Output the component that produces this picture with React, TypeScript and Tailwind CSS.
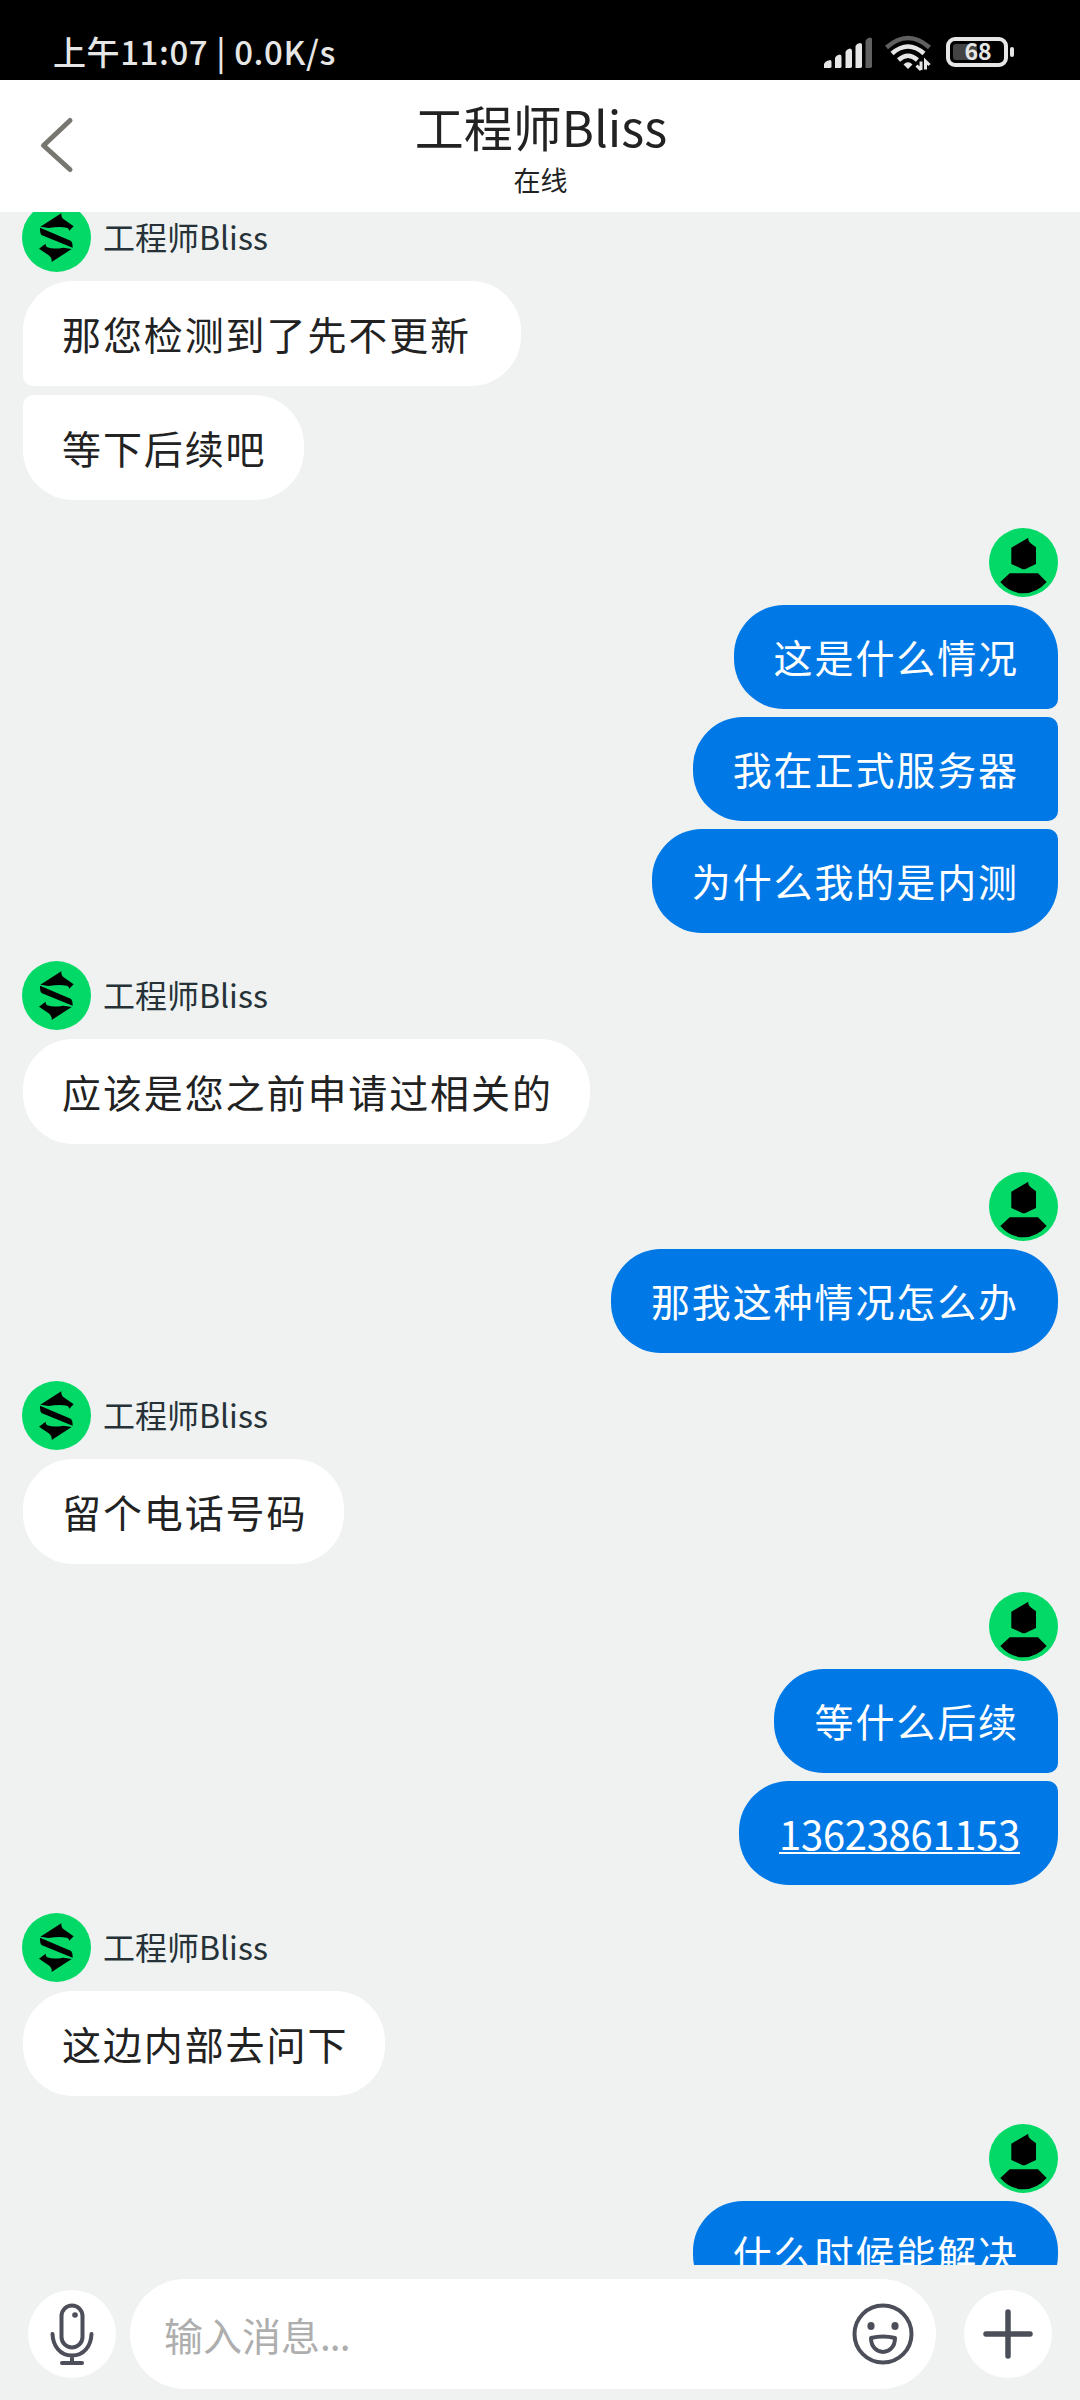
import clsx from "clsx";

type Group = {
  from: "agent" | "me";
  messages: string[];
};

const groups: Group[] = [
  { from: "agent", messages: ["那您检测到了先不更新", "等下后续吧"] },
  { from: "me", messages: ["这是什么情况", "我在正式服务器", "为什么我的是内测"] },
  { from: "agent", messages: ["应该是您之前申请过相关的"] },
  { from: "me", messages: ["那我这种情况怎么办"] },
  { from: "agent", messages: ["留个电话号码"] },
  { from: "me", messages: ["等什么后续", "13623861153"] },
  { from: "agent", messages: ["这边内部去问下"] },
  { from: "me", messages: ["什么时候能解决"] },
];

const AgentAvatar = () => (
  <svg className="size-[69px] shrink-0" viewBox="66 63 207 207">
    <circle cx="169.5" cy="166.5" r="103.5" fill="#03d967" />
    <path d="M184 94Q183 106 191 112L221 133L207 147Q208 139 200 137Q178 133 146 138L121 134Z" />
    <path d="M120 137L212 176Q218 180 218 197L126 160Q119 155 120 137Z" />
    <path d="M117 200L137 185Q136 193 142 196Q160 203 190 197L215 201L155 240Q157 228 146 220Z" />
  </svg>
);

const UserAvatar = () => (
  <svg className="size-[69px] shrink-0" viewBox="87 66 207 207">
    <circle cx="190.5" cy="169.5" r="103.5" fill="#03d967" />
    <path d="M205 95Q203 106 212 112L228 124V174L198 188Q192 191 185 188L154 174V125Z" />
    <path d="M149 202H234L260 228Q230 262 190 262Q150 262 121 228Z" />
  </svg>
);

const StatusBar = () => (
  <div className="flex h-20 shrink-0 items-start justify-between bg-black pl-[53px] pr-[66px] text-[#e6e6e6]">
    <p className="mt-[29px] whitespace-pre text-[33px] font-medium leading-[44px] tracking-[0.6px]">
      上午11:07 | 0.0K/s
    </p>
    <div className="mt-[34px] flex">
      <svg width="48" height="36" viewBox="824 34 48 36" fill="#e6e6e6">
        <path d="M824 68V64Q825 61 830 60Q831.500 60 831.500 62V67Q831 68 830 68Z" />
        <path d="M835 68V58Q836 55 840 54.500Q841.500 54.500 841.500 57V67Q841 68 840 68Z" />
        <path d="M845.500 68V52Q846.500 49 850 48.500Q852 48.500 852 51V67Q851 68 850 68Z" />
        <path d="M855.500 68V46Q856.500 43.500 860 43Q862 43 862 45V67Q861 68 860 68Z" />
        <path d="M865.500 68V41Q866.500 38 870 37.500Q872 37.500 872 39V67Q871 68 870 68Z" fill="#606060" />
      </svg>
      <svg className="ml-[13px]" width="46" height="38" viewBox="885 34 46 38" fill="none" stroke="#e6e6e6" strokeWidth="4.500">
        <path d="M886.500 47.500Q908 28.500 929.500 47.500" stroke="#606060" />
        <path d="M892 53.500Q908 39.500 924 53.500" />
        <path d="M898.500 60Q908 51.500 917.500 60" />
        <path d="M908 69L903.500 64.500Q908 60 912.500 64.500Z" fill="#e6e6e6" stroke="none" />
        <path d="M921 61.500V70M916.500 65.500L921 70" strokeWidth="3" />
        <path d="M925.500 69.500V61L929.500 65" strokeWidth="3" />
      </svg>
      <div className="ml-[15px] mt-[3px] flex h-[30px] items-center gap-[2px]">
        <div className="relative h-[30px] w-[62px] rounded-[9px] border-4 border-[#e6e6e6]">
          <div className="absolute left-[3px] top-[3px] h-4 w-[24px] rounded-[3px] bg-[#444444]" />
          <p className="absolute inset-0 -top-[2px] left-[2px] text-center text-[23px] font-bold leading-[23px]">68</p>
        </div>
        <div className="h-[10px] w-1 rounded-[2px] bg-[#e6e6e6]" />
      </div>
    </div>
  </div>
);

const Header = () => (
  <div className="relative z-10 flex h-[132px] shrink-0 flex-col items-center bg-white text-[#222222]">
    <svg
      className="absolute left-[39px] top-[35px]"
      width="36"
      height="60"
      viewBox="0 0 36 60"
      fill="none"
      stroke="#777670"
      strokeWidth="5"
      strokeLinecap="round"
      strokeLinejoin="round"
    >
      <path d="M31 5.500L4.500 30.500L31 54.500" />
    </svg>
    <p className="mt-[13px] pl-[2px] text-[49px] leading-[66px]">工程师Bliss</p>
    <p className="mt-[3px] pl-px text-[27px] leading-[36px]">在线</p>
  </div>
);

const Bubble = ({ text, mine, first, last }: { text: string; mine: boolean; first: boolean; last: boolean }) => {
  const isPhone = /^\d+$/.test(text);
  return (
    <div
      className={clsx(
        "flex items-center rounded-[50px] text-[39px] tracking-[1.900px] whitespace-nowrap",
        mine ? "h-[104px] bg-[#0079e7] pl-[40px] text-white" : "h-[105px] bg-white pl-[39px] text-[#222222]",
        mine && (isPhone ? "pr-[36px]" : "pr-[39px]"),
        !mine && (last ? "pr-[37px]" : "pr-[50px]"),
        mine && !first && "rounded-tr-[10px]",
        mine && !last && "rounded-br-[10px]",
        !mine && !first && "rounded-tl-[10px]",
        !mine && !last && "rounded-bl-[10px]"
      )}
    >
      {isPhone ? (
        <span className="mr-[2px] mt-px border-b-2 border-white text-[40px] leading-[38px] tracking-[-0.300px]">{text}</span>
      ) : (
        <span className="-mt-[2px] leading-[56px]">{text}</span>
      )}
    </div>
  );
};

const MessageGroup = ({ from, messages }: Group) => {
  const mine = from === "me";
  return (
    <div className={clsx("flex flex-col", mine ? "items-end gap-2" : "items-start gap-[9px]")}>
      {mine ? (
        <UserAvatar />
      ) : (
        <div className="-ml-px flex items-center">
          <AgentAvatar />
          <p className="-mt-[3px] ml-[12px] text-[32px] leading-[44px] text-[#263238]">工程师Bliss</p>
        </div>
      )}
      {messages.map((text, i) => (
        <Bubble key={text} text={text} mine={mine} first={i === 0} last={i === messages.length - 1} />
      ))}
    </div>
  );
};

const InputBar = () => (
  <div className="flex h-[135px] shrink-0 items-center bg-[#eff2f1] px-[28px] pt-[3px] text-[#4c4f59]">
    <div className="flex size-[88px] items-center justify-center rounded-full bg-white">
      <svg width="46" height="64" viewBox="0 0 46 64" fill="none" stroke="currentColor" strokeWidth="4" strokeLinecap="round">
        <rect x="12.500" y="3.500" width="21" height="42" rx="10.500" />
        <path d="M3.500 32C4 44 11 53.500 23 53.500S42 44 42.500 32M23 54V60M13 61H33" />
        <circle cx="26" cy="13" r="2.800" fill="currentColor" stroke="none" />
      </svg>
    </div>
    <div className="ml-[14px] flex h-[110px] w-[806px] items-center justify-between rounded-[55px] bg-white pl-[34px] pr-[22px]">
      <p className="-mt-px text-[39px] leading-[56px] text-[#aeaeae]">
        输入消息<span className="tracking-[-1px]">...</span>
      </p>
      <svg width="62" height="62" viewBox="0 0 62 62" fill="none" stroke="currentColor" strokeWidth="4">
        <circle cx="31" cy="31" r="28.500" />
        <ellipse cx="19" cy="23" rx="3.600" ry="4" fill="currentColor" stroke="none" />
        <ellipse cx="43" cy="23" rx="3.600" ry="4" fill="currentColor" stroke="none" />
        <path d="M19 35Q31 32 43 35C43 53.500 19 53.500 19 35Z" strokeLinejoin="round" />
      </svg>
    </div>
    <div className="ml-auto flex size-[88px] items-center justify-center rounded-full bg-white">
      <svg width="50" height="50" viewBox="0 0 50 50" fill="none" stroke="currentColor" strokeWidth="5.500" strokeLinecap="round">
        <path d="M25 3V47M3 25H47" />
      </svg>
    </div>
  </div>
);

const App = () => {
  return (
    <div className="flex h-[2400px] w-[1080px] flex-col overflow-hidden bg-[#eff2f1] font-['Noto_Sans_CJK_SC',sans-serif]">
      <StatusBar />
      <Header />
      <div className="min-h-0 flex-1 overflow-hidden">
        <div className="-mt-[9px] flex flex-col gap-[28px] pl-[23px] pr-[22px]">
          {groups.map((group, i) => (
            <MessageGroup key={i} {...group} />
          ))}
        </div>
      </div>
      <InputBar />
    </div>
  );
};

export default App;
